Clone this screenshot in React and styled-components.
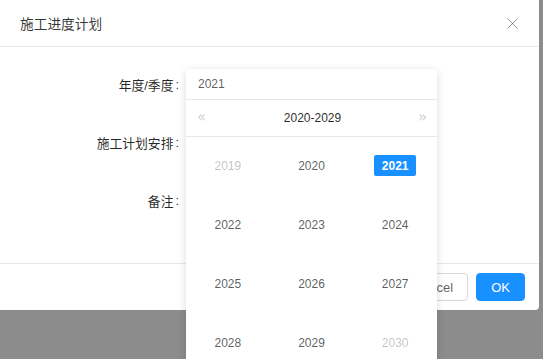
import React from "react";
import styled, { createGlobalStyle } from "styled-components";

const Global = createGlobalStyle`
  html, body { margin: 0; padding: 0; }
  body {
    font-family: "Liberation Sans", "Noto Sans CJK SC", Arial, sans-serif;
    font-size: 12px;
    overflow: hidden;
  }
`;

const Page = styled.div`
  position: relative;
  width: 543px;
  height: 359px;
  background: #8c8c8c;
  overflow: hidden;
`;

const Modal = styled.div`
  width: 539px;
  height: 310px;
  background: #fff;
  border-radius: 0 0 4px 0;
  display: flex;
  flex-direction: column;
  box-sizing: border-box;
`;

const Header = styled.div`
  height: 47px;
  box-sizing: border-box;
  border-bottom: 1px solid #e8e8e8;
  padding: 0 20px 0 20px;
  display: flex;
  align-items: center;
  justify-content: space-between;
`;

const Title = styled.div`
  font-size: 13.7px;
  color: rgba(0, 0, 0, 0.8);
  padding-bottom: 1px;
`;

const Close = styled.svg`
  width: 11px;
  height: 11px;
  margin-right: 1px;
`;

const Body = styled.div`
  flex: 1;
  padding-top: 22px;
  display: flex;
  flex-direction: column;
  gap: 27px;
`;

const Row = styled.div`
  display: flex;
  align-items: center;
  height: 31px;
`;

const Label = styled.div`
  width: 179px;
  display: flex;
  justify-content: flex-end;
  align-items: center;
  color: rgba(0, 0, 0, 0.85);
  font-size: 12.8px;
  white-space: nowrap;
  &::after {
    content: ":";
    margin-left: 2px;
  }
`;

const Footer = styled.div`
  height: 47px;
  box-sizing: border-box;
  border-top: 1px solid #e8e8e8;
  padding: 0 14px;
  display: flex;
  align-items: center;
  justify-content: flex-end;
  gap: 8px;
`;

const Button = styled.button`
  height: 28px;
  padding: 0 14px;
  border-radius: 4px;
  font-family: inherit;
  font-size: 13px;
  border: 1px solid ${(p) => (p.$primary ? "#1890ff" : "#d9d9d9")};
  background: ${(p) => (p.$primary ? "#1890ff" : "#fff")};
  color: ${(p) => (p.$primary ? "#fff" : "rgba(0,0,0,0.65)")};
  min-width: ${(p) => (p.$primary ? "48px" : "auto")};
`;

const Popup = styled.div`
  position: absolute;
  left: 186px;
  top: 69px;
  width: 251px;
  height: 320px;
  background: #fff;
  border-radius: 4px;
  box-shadow: 0 2px 8px rgba(0, 0, 0, 0.15);
  display: flex;
  flex-direction: column;
`;

const PopInput = styled.div`
  height: 31px;
  box-sizing: border-box;
  border-bottom: 1px solid #e8e8e8;
  padding: 0 12px;
  display: flex;
  align-items: center;
  color: rgba(0, 0, 0, 0.65);
  font-size: 12px;
`;

const PanelHead = styled.div`
  height: 37px;
  box-sizing: border-box;
  border-bottom: 1px solid #e8e8e8;
  padding: 0 9px 0 11px;
  display: flex;
  align-items: center;
  justify-content: space-between;
`;

const Arrow = styled.span`
  color: rgba(0, 0, 0, 0.22);
  font-family: "DejaVu Sans", sans-serif;
  font-size: 15px;
  width: 10px;
  line-height: 1;
  padding-bottom: 2px;
`;

const Decade = styled.span`
  color: rgba(0, 0, 0, 0.85);
  font-size: 12px;
`;

const Grid = styled.div`
  display: grid;
  grid-template-columns: repeat(3, 1fr);
  grid-auto-rows: 59px;
  margin-top: -1px;
`;

const Cell = styled.div`
  display: flex;
  align-items: center;
  justify-content: center;
`;

const Year = styled.span`
  display: inline-flex;
  align-items: center;
  justify-content: center;
  width: 42px;
  height: 21px;
  border-radius: 2px;
  font-size: 12px;
  background: ${(p) => (p.$selected ? "#1890ff" : "transparent")};
  color: ${(p) =>
    p.$selected ? "#fff" : p.$muted ? "rgba(0,0,0,0.25)" : "rgba(0,0,0,0.65)"};
  font-weight: ${(p) => (p.$selected ? 700 : 400)};
`;

const years = [2019, 2020, 2021, 2022, 2023, 2024, 2025, 2026, 2027, 2028, 2029, 2030];

export default function App() {
  return (
    <>
      <Global />
      <Page>
        <Modal>
          <Header>
            <Title>施工进度计划</Title>
            <Close viewBox="0 0 11 11">
              <path d="M0.5 0.5 L10.5 10.5 M10.5 0.5 L0.5 10.5" stroke="rgba(0,0,0,0.4)" strokeWidth="1" fill="none" />
            </Close>
          </Header>
          <Body>
            <Row><Label>年度/季度</Label></Row>
            <Row><Label>施工计划安排</Label></Row>
            <Row><Label>备注</Label></Row>
          </Body>
          <Footer>
            <Button>Cancel</Button>
            <Button $primary>OK</Button>
          </Footer>
        </Modal>
        <Popup>
          <PopInput>2021</PopInput>
          <PanelHead>
            <Arrow>«</Arrow>
            <Decade>2020-2029</Decade>
            <Arrow>»</Arrow>
          </PanelHead>
          <Grid>
            {years.map((y) => (
              <Cell key={y}>
                <Year $selected={y === 2021} $muted={y === 2019 || y === 2030}>
                  {y}
                </Year>
              </Cell>
            ))}
          </Grid>
        </Popup>
      </Page>
    </>
  );
}
